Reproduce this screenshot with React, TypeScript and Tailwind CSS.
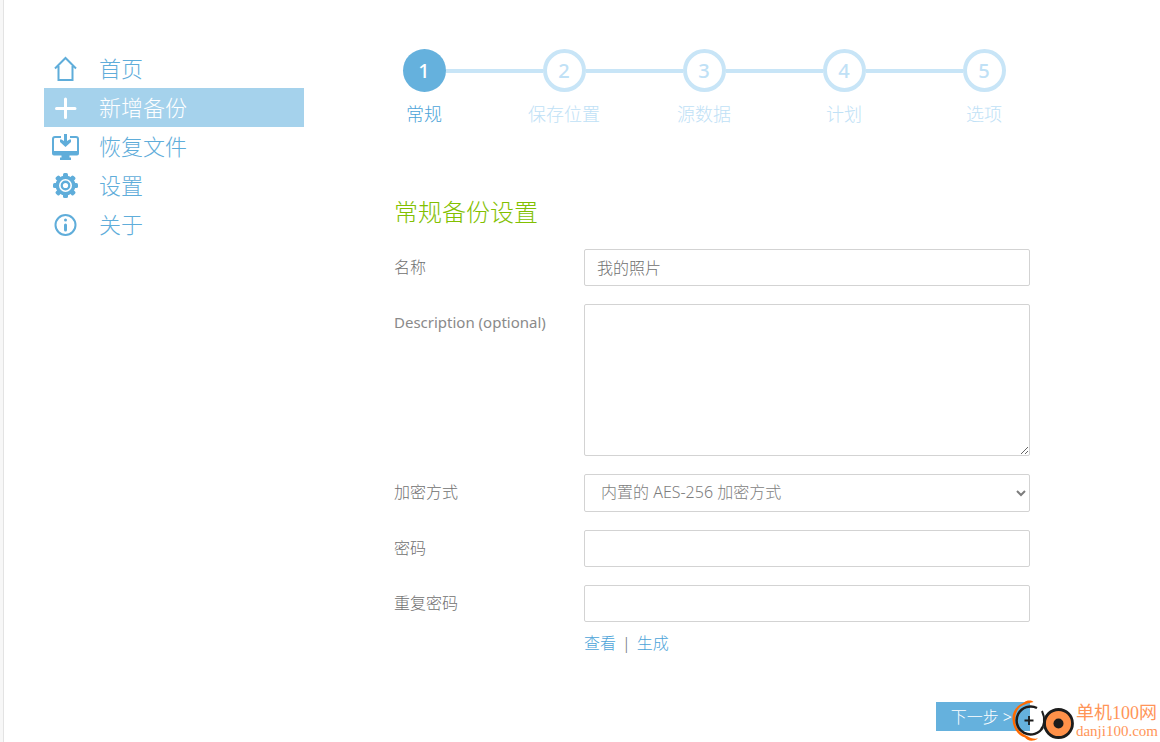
import React, { useState } from "react";
import clsx from "clsx";

interface NavItem {
  label: string;
  icon: React.ReactNode;
}

const HomeIcon = () => (
  <svg width="28" height="28" viewBox="0 0 28 28" fill="none" stroke="currentColor" strokeWidth="2">
    <path d="M3 13.500 13.500 3 24 13.500M6.500 11v14h14V11" />
  </svg>
);

const PlusIcon = () => (
  <svg width="28" height="28" viewBox="0 0 28 28" fill="none" stroke="currentColor" strokeWidth="3" strokeLinecap="round">
    <path d="M13.500 5v18.500M4.500 14.500h18.500" />
  </svg>
);

const RestoreIcon = () => (
  <svg width="28" height="28" viewBox="0 0 28 28" fill="none">
    <path d="M9 4H3A2 2 0 0 0 1 6V19h25V6a2 2 0 0 0-2-2H18" stroke="currentColor" strokeWidth="2" />
    <path d="M0 18.500h27v2a2 2 0 0 1-2 2H17.500v2h1.500V27h-11v-2.500H9.500v-2H2a2 2 0 0 1-2-2z" fill="currentColor" />
    <path d="M12 1h3v7l2.500-1.500h1.500V9L13.500 14 8 9V6.500H9.500L12 8z" fill="currentColor" />
  </svg>
);

const GearIcon = () => (
  <svg width="28" height="28" viewBox="0 0 28 28" fill="currentColor">
    {[0, 45, 90, 135].map((angle) => (
      <rect key={angle} x="11" y="1" width="5" height="25" rx="1.500" transform={`rotate(${angle} 13.500 13.500)`} />
    ))}
    <circle cx="13.500" cy="13.500" r="10" />
    <circle cx="13.500" cy="13.500" r="5.700" fill="none" stroke="white" strokeWidth="1.600" />
    <circle cx="13.500" cy="13.500" r="2.600" fill="white" />
  </svg>
);

const InfoIcon = () => (
  <svg width="28" height="28" viewBox="0 0 28 28" fill="none" stroke="currentColor" strokeLinecap="round">
    <circle cx="13.500" cy="14" r="10" strokeWidth="2" />
    <path d="M13.500 14v5" strokeWidth="3" />
    <path d="M13.500 9v.01" strokeWidth="3" />
  </svg>
);

const navItems: NavItem[] = [
  { label: "首页", icon: <HomeIcon /> },
  { label: "新增备份", icon: <PlusIcon /> },
  { label: "恢复文件", icon: <RestoreIcon /> },
  { label: "设置", icon: <GearIcon /> },
  { label: "关于", icon: <InfoIcon /> },
];

const steps = ["常规", "保存位置", "源数据", "计划", "选项"];

const inputClass =
  "w-full rounded-xs border border-[#d3d3d3] bg-white px-3 pb-0.5 text-base outline-none focus:border-[#65b1dd]";

const Sidebar = () => (
  <nav className="w-[260px] shrink-0">
    <ul>
      {navItems.map((item, index) => (
        <li key={item.label}>
          <a
            href="#"
            className={clsx(
              "flex h-[39px] items-center gap-[19px] pl-2 text-[22px]",
              index === 1 ? "bg-[#a5d2ec] text-white" : "text-[#5fadda]"
            )}
          >
            {item.icon}
            <span>{item.label}</span>
          </a>
        </li>
      ))}
    </ul>
  </nav>
);

const Steps = () => (
  <ol className="flex">
    {steps.map((step, index) => (
      <li
        key={step}
        className={clsx(
          "flex w-[140px] shrink-0 flex-col items-center",
          index === 0 ? "text-[#4ba3d8]" : "text-[#c0e1f6]"
        )}
      >
        <div className="flex w-full items-center">
          <span className={clsx("h-1 flex-1", index > 0 && "bg-[#c8e5f7]")} />
          <span
            className={clsx(
              "flex size-[43px] items-center justify-center rounded-full text-xl font-medium",
              index === 0 ? "bg-[#65b1dd] text-white" : "border-4 border-[#c8e5f7]"
            )}
          >
            {index + 1}
          </span>
          <span className={clsx("h-1 flex-1", index < steps.length - 1 && "bg-[#c8e5f7]")} />
        </div>
        <span className="mt-2 text-lg leading-7">{step}</span>
      </li>
    ))}
  </ol>
);

interface FieldProps {
  id: string;
  label: string;
  labelClass?: string;
  children: React.ReactNode;
}

const Field = ({ id, label, labelClass = "text-base", children }: FieldProps) => (
  <div className="flex items-start">
    <label htmlFor={id} className={clsx("w-[190px] shrink-0 pt-1.5", labelClass)}>
      {label}
    </label>
    <div className="flex min-w-0 flex-1 flex-col">{children}</div>
  </div>
);

const Watermark = () => (
  <div className="pointer-events-none absolute right-0.5 bottom-0 flex items-center font-['Liberation_Serif','Noto_Sans_CJK_SC',serif] font-normal text-[#ff9558]">
    <svg width="64" height="42" viewBox="0 0 64 42" fill="none">
      <path
        d="M21.500 2C19 0 15 0 12 2.500 4 6 0 12 .5 19.500 1 29 6 35 13 37.500c2 3.500 8 4.500 13 1-5 .5-8-.5-11-2.500C7 33 3 27 3 19.500 3 12 7 6 13 4.500c3-1.500 6-2 8.500-2.500z"
        fill="#ff6a00"
      />
      <path d="M25 8A14 14 0 1 0 31 27" stroke="#1c1c1c" strokeWidth="2.500" />
      <path d="M12.500 20.500h9M17 16v9" stroke="#1c1c1c" strokeWidth="1.800" />
      <circle cx="46.500" cy="23.500" r="14" fill="#ff9149" stroke="#1c1c1c" strokeWidth="2.800" />
      <path d="M30 11c1.500 3 2.500 6 2 11-.3 3-1 5-3 7" stroke="#1c1c1c" strokeWidth="2" />
      <path d="M38 12c-3.500 3-5.500 7-5.500 12" stroke="#1c1c1c" strokeWidth="2" />
      <circle cx="46.500" cy="23.500" r="5" fill="#1c1c1c" />
    </svg>
    <div className="flex flex-col">
      <span className="text-lg leading-5">单机100网</span>
      <span className="text-[15px] leading-4">danji100.com</span>
    </div>
  </div>
);

const App = () => {
  const [name, setName] = useState("我的照片");
  const [description, setDescription] = useState("");
  const [password, setPassword] = useState("");
  const [repeat, setRepeat] = useState("");
  const [showPassword, setShowPassword] = useState(false);
  const passwordType = showPassword ? "text" : "password";

  const generatePassword = () => {
    const generated = Math.random().toString(36).slice(2, 14);
    setPassword(generated);
    setRepeat(generated);
    setShowPassword(true);
  };

  return (
    <div className="relative flex min-h-screen bg-white font-['Noto_Sans','Noto_Sans_CJK_SC',sans-serif] font-light text-[#707070]">
      <div className="w-1 shrink-0 border-r border-[#e3e3e3] bg-[#f7f7f7]" />
      <div className="flex flex-1 pt-[49px] pl-10">
        <Sidebar />
        <main className="ml-[50px] min-w-0 flex-1 pr-[90px]">
          <Steps />

          <form className="px-10" onSubmit={(e) => e.preventDefault()}>
            <h2 className="mt-[68px] mb-[21px] text-2xl leading-8 text-[#82c000]">常规备份设置</h2>

            <div className="flex flex-col gap-[18px]">
              <Field id="name" label="名称">
                <input
                  id="name"
                  className={clsx(inputClass, "h-[37px]")}
                  value={name}
                  onChange={(e) => setName(e.target.value)}
                />
              </Field>
              <Field
                id="description"
                label="Description (optional)"
                labelClass="text-[15px] leading-6 font-normal text-[#8a8a8a]"
              >
                <textarea
                  id="description"
                  className={clsx(inputClass, "h-[152px]")}
                  value={description}
                  onChange={(e) => setDescription(e.target.value)}
                />
              </Field>
              <Field id="encryption" label="加密方式">
                <select id="encryption" className={clsx(inputClass, "h-[38px] text-[#7d7d7d]")}>
                  <option>内置的 AES-256 加密方式</option>
                </select>
              </Field>
              <Field id="password" label="密码">
                <input
                  id="password"
                  type={passwordType}
                  className={clsx(inputClass, "h-[37px]")}
                  value={password}
                  onChange={(e) => setPassword(e.target.value)}
                />
              </Field>
              <Field id="repeat-password" label="重复密码">
                <input
                  id="repeat-password"
                  type={passwordType}
                  className={clsx(inputClass, "h-[37px]")}
                  value={repeat}
                  onChange={(e) => setRepeat(e.target.value)}
                />
                {/* Password helpers */}
                <div className="mt-[9px] flex gap-1.5 text-base">
                  <a href="#" className="text-[#4ba3d8]" onClick={() => setShowPassword(!showPassword)}>
                    查看
                  </a>
                  <span>|</span>
                  <a href="#" className="text-[#4ba3d8]" onClick={generatePassword}>
                    生成
                  </a>
                </div>
              </Field>
            </div>

            <div className="mt-[47px] flex justify-end">
              <button type="submit" className="h-[29px] bg-[#65b1dd] pr-[18px] pl-[15px] text-base text-white">
                下一步 &gt;
              </button>
            </div>
          </form>
        </main>
      </div>
      <Watermark />
    </div>
  );
};

export default App;
